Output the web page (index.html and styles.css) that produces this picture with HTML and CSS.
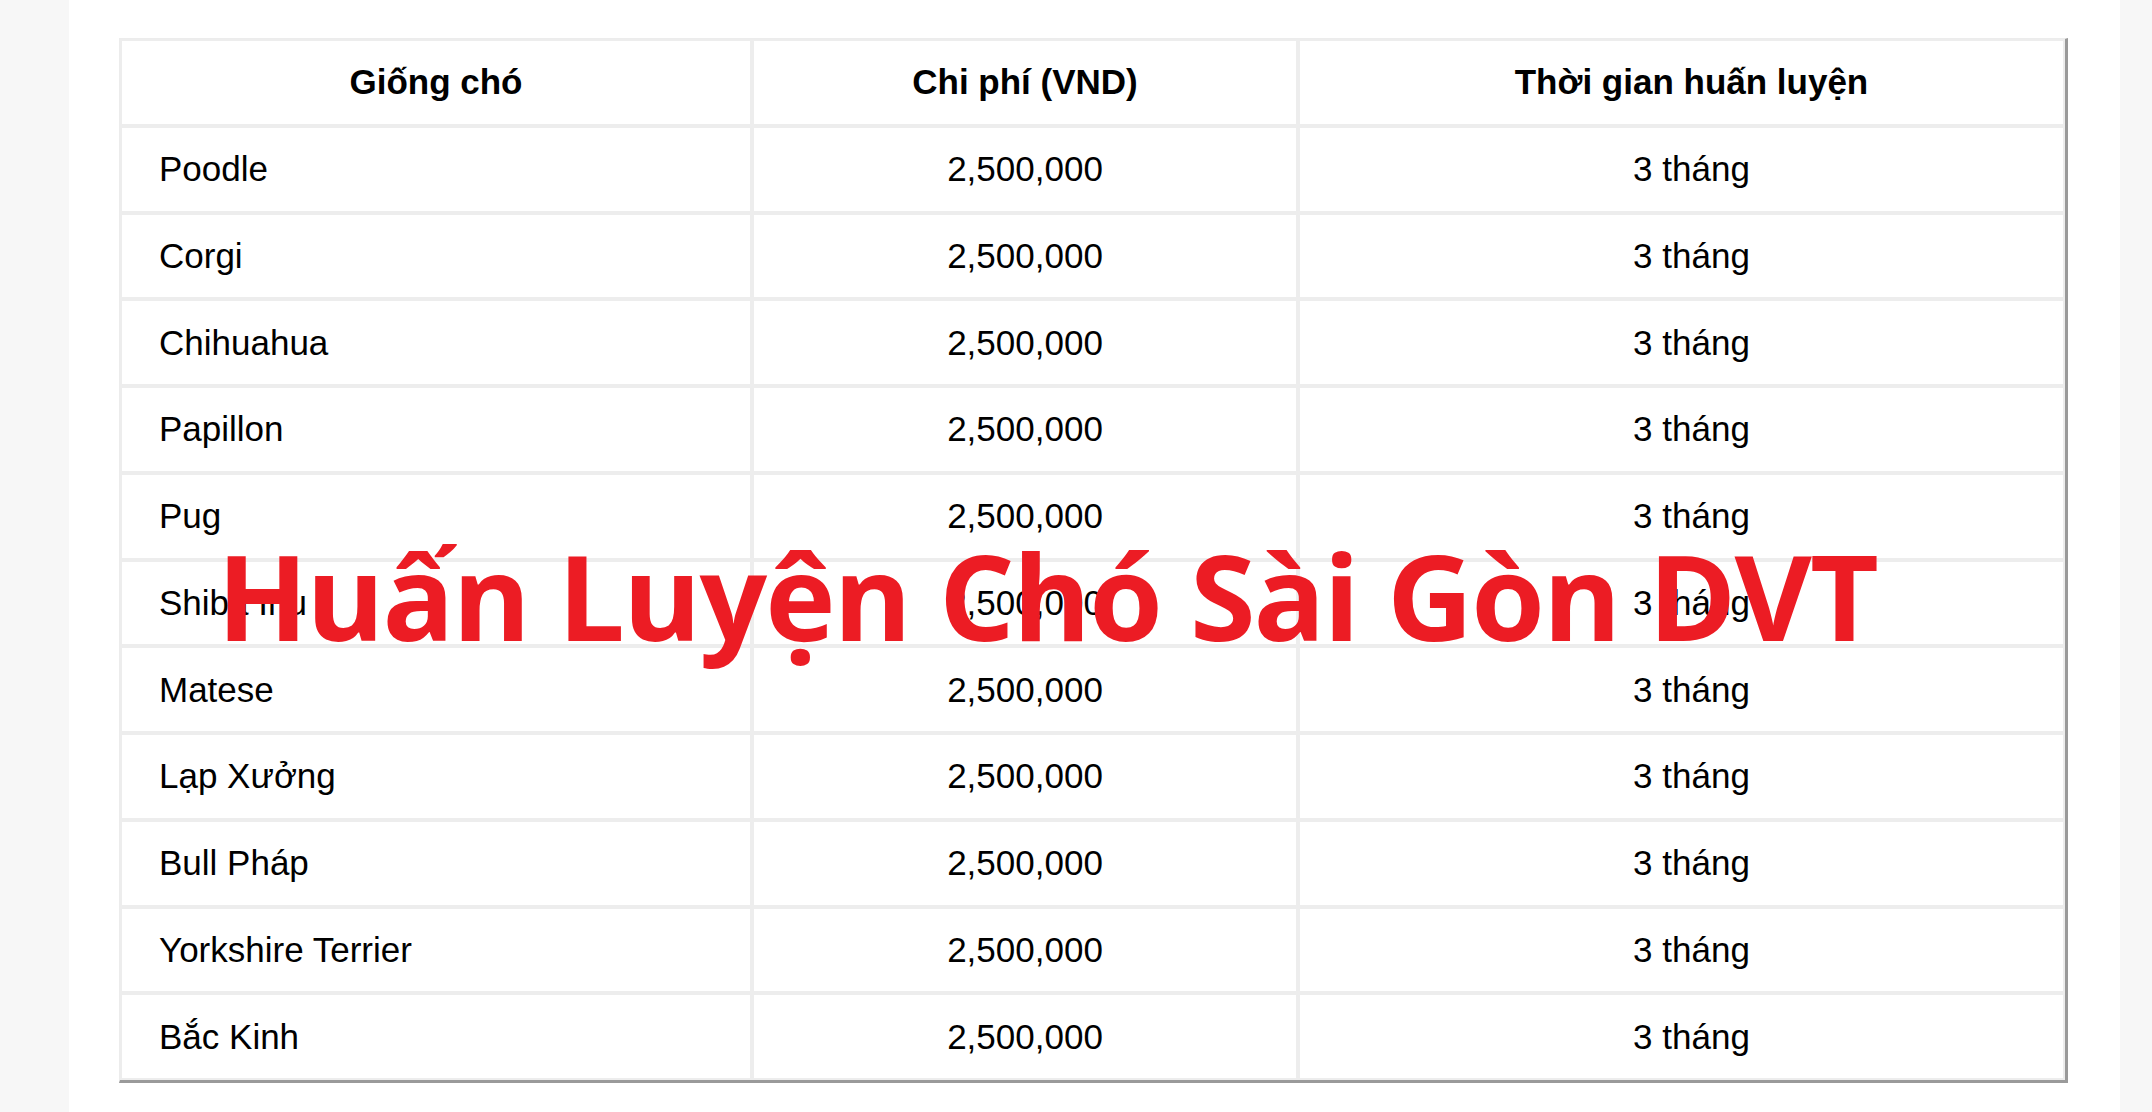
FILE: index.html
```html
<!DOCTYPE html>
<html lang="vi">
<head>
<meta charset="utf-8">
<title>Bảng giá huấn luyện chó</title>
<link rel="stylesheet" href="styles.css">
</head>
<body>
<div class="page">
  <table class="price">
    <thead>
      <tr>
        <th class="c1">Giống chó</th>
        <th class="c2">Chi phí (VND)</th>
        <th class="c3">Thời gian huấn luyện</th>
      </tr>
    </thead>
    <tbody>
      <tr><td class="c1">Poodle</td><td class="c2">2,500,000</td><td class="c3">3 tháng</td></tr>
      <tr><td class="c1">Corgi</td><td class="c2">2,500,000</td><td class="c3">3 tháng</td></tr>
      <tr><td class="c1">Chihuahua</td><td class="c2">2,500,000</td><td class="c3">3 tháng</td></tr>
      <tr><td class="c1">Papillon</td><td class="c2">2,500,000</td><td class="c3">3 tháng</td></tr>
      <tr><td class="c1">Pug</td><td class="c2">2,500,000</td><td class="c3">3 tháng</td></tr>
      <tr><td class="c1">Shiba Inu</td><td class="c2">2,500,000</td><td class="c3">3 tháng</td></tr>
      <tr><td class="c1">Matese</td><td class="c2">2,500,000</td><td class="c3">3 tháng</td></tr>
      <tr><td class="c1">Lạp Xưởng</td><td class="c2">2,500,000</td><td class="c3">3 tháng</td></tr>
      <tr><td class="c1">Bull Pháp</td><td class="c2">2,500,000</td><td class="c3">3 tháng</td></tr>
      <tr><td class="c1">Yorkshire Terrier</td><td class="c2">2,500,000</td><td class="c3">3 tháng</td></tr>
      <tr><td class="c1">Bắc Kinh</td><td class="c2">2,500,000</td><td class="c3">3 tháng</td></tr>
    </tbody>
  </table>
  <div class="watermark">Huấn Luyện Chó Sài Gòn DVT</div>
</div>
</body>
</html>
```
FILE: styles.css
```css
html, body {
  margin: 0;
  padding: 0;
}
body {
  background: #f7f7f7;
  font-family: "Liberation Sans", Arial, sans-serif;
  color: #000;
  overflow: hidden;
}
.page {
  position: relative;
  width: 2051px;
  height: 1112px;
  margin-left: 69px;
  background: #fff;
  box-sizing: border-box;
  padding: 38px 0 0 50px;
}
.price {
  width: 1949px;
  table-layout: fixed;
  border-collapse: separate;
  border-spacing: 0;
  border-style: solid;
  border-width: 1px 3px 3px 1px;
  border-color: #ececec #9a9a9a #9a9a9a #ececec;
  font-size: 35px;
}
.price th,
.price td {
  box-sizing: border-box;
  height: 86.75px;
  border: 2px solid #ededed;
  padding: 0 37px;
  vertical-align: middle;
  line-height: 1.15;
}
.price th {
  font-weight: bold;
  text-align: center;
}
.price td.c1 {
  text-align: left;
}
.price td.c2,
.price td.c3 {
  text-align: center;
}
.price .c1 { width: 632px; }
.price .c2 { width: 546px; }
.price .c3 {
  width: 767px;
  padding-left: 47px;
  padding-right: 27px;
}
.watermark {
  position: absolute;
  left: 148px;
  top: 536px;
  font-family: "Open Sans", sans-serif;
  font-weight: bold;
  font-size: 119px;
  letter-spacing: -1.9px;
  line-height: 1;
  color: #ec1c24;
  white-space: nowrap;
}
```
